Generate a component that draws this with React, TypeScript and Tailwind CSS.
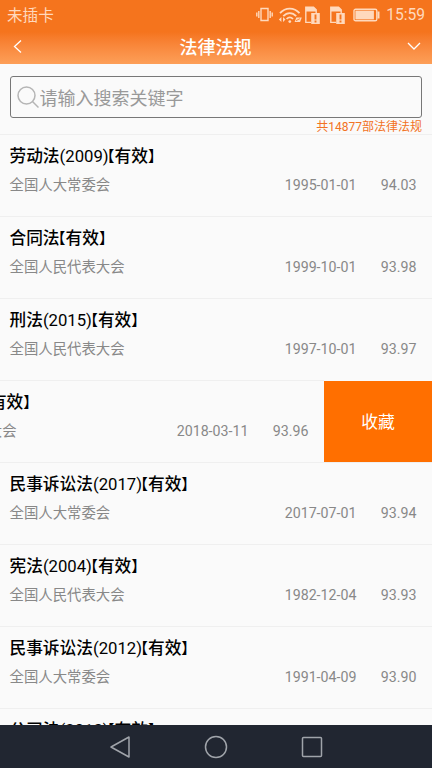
import { useState } from 'react';

interface Law {
  id: number;
  title: string;
  year?: string;
  issuer: string;
  date: string;
  score: string;
}

const LAWS: Law[] = [
  { id: 1, title: '劳动法', year: '2009', issuer: '全国人大常委会', date: '1995-01-01', score: '94.03' },
  { id: 2, title: '合同法', issuer: '全国人民代表大会', date: '1999-10-01', score: '93.98' },
  { id: 3, title: '刑法', year: '2015', issuer: '全国人民代表大会', date: '1997-10-01', score: '93.97' },
  { id: 4, title: '宪法', year: '2018', issuer: '全国人民代表大会', date: '2018-03-11', score: '93.96' },
  { id: 5, title: '民事诉讼法', year: '2017', issuer: '全国人大常委会', date: '2017-07-01', score: '93.94' },
  { id: 6, title: '宪法', year: '2004', issuer: '全国人民代表大会', date: '1982-12-04', score: '93.93' },
  { id: 7, title: '民事诉讼法', year: '2012', issuer: '全国人大常委会', date: '1991-04-09', score: '93.90' },
  { id: 8, title: '公司法', year: '2013', issuer: '全国人大常委会', date: '2014-03-01', score: '93.89' },
];

function SimIcon() {
  return (
    <svg width="17" height="20" viewBox="0 0 17 20" fill="none">
      <path d="M7 17.4H1.8V2.2H9.5L12.2 4.8V8" stroke="currentColor" strokeWidth="1.4" />
      <path d="M1.8 2h7.8l2.4 2.6v1.8H1.8z" fill="currentColor" />
      <path d="M7.2 8h8.6v11H7.2z" fill="currentColor" />
      <path d="M11.5 9.5v5M11.5 15.6v1.8" stroke="#f5741d" strokeWidth="1.9" />
    </svg>
  );
}

function StatusBar() {
  return (
    <div className="flex h-[30px] items-center pl-[7px] pr-[7px] text-[#ffd9bd]">
      <span className="pt-[3px] text-[15.6px] leading-none">未插卡</span>
      <svg className="ml-auto" width="17" height="16" viewBox="0 0 17 16" fill="none" stroke="currentColor" strokeWidth="1.4">
        <path d="M5 1.5h7v12H5zM2.8 4v7M14.2 4v7M.8 5.5v4M16.2 5.5v4" />
      </svg>
      <svg className="ml-[5px]" width="25" height="18" viewBox="0 0 25 18" fill="none" stroke="currentColor" strokeWidth="1.8">
        <path d="M2 7.2c5.4-6.2 14.1-6.2 19.5 0M5.3 10.2c3.8-4.2 9.1-4.2 12.9 0M8.6 13c2.1-2.3 4.3-2.3 6.4 0" />
        <circle cx="11.8" cy="15.6" r="1.4" fill="currentColor" stroke="none" />
        <path d="M3.4 11 .9 13.5l2.5 2.5zM5 11l2.5 2.5L5 16zM18.3 11.5h5.5l-1.7 4.5h-5.5z" fill="currentColor" stroke="none" />
        <path d="m18 14.7 3.9-2" stroke="#f5741d" strokeWidth=".8" />
      </svg>
      <div className="ml-px"><SimIcon /></div>
      <div className="ml-2"><SimIcon /></div>
      <svg className="ml-[7px]" width="28" height="14" viewBox="0 0 28 14" fill="none" stroke="currentColor">
        <rect x="1" y="1.2" width="22.8" height="11.6" rx="1.6" strokeWidth="1.4" />
        <rect x="2.4" y="2.6" width="18.5" height="8.8" fill="currentColor" stroke="none" />
        <path d="M25.5 3.5v7" strokeWidth="2" />
      </svg>
      <span className="ml-[5px] pt-px text-[15.6px] leading-none">15:59</span>
    </div>
  );
}

function LawRow({ law, swiped, onSwipe }: { law: Law; swiped: boolean; onSwipe: () => void }) {
  return (
    <div className="flex h-[82px] shrink-0 overflow-hidden" onClick={onSwipe}>
      <div className={`w-[432px] shrink-0 border-t border-[#efefef] pl-[9.5px] pr-[15.5px] ${swiped ? '-ml-[108px]' : ''}`}>
        <div className="mt-[10px] flex h-6 items-center whitespace-nowrap text-[16.7px] font-medium text-black">
          <span>{law.title}</span>
          {law.year && <span className="font-normal">({law.year})</span>}
          {/* half-width lenticular brackets */}
          <span className="flex w-[6px] justify-end text-[15px] font-normal [font-feature-settings:'halt']">【</span>
          <span>有效</span>
          <span className="flex w-[6px] text-[15px] font-normal [font-feature-settings:'halt']">】</span>
        </div>
        <div className="mt-[7px] flex h-5 items-center text-[14.4px] text-[#888]">
          <span>{law.issuer}</span>
          <span className="ml-auto text-[14.2px]">{law.date}</span>
          <span className="ml-[24.5px] text-[14.2px]">{law.score}</span>
        </div>
      </div>
      {swiped && (
        <button className="mt-px w-[108px] shrink-0 bg-[#ff6f00] pt-[3px] text-[16.8px] text-white">收藏</button>
      )}
    </div>
  );
}

export default function App() {
  const [keyword, setKeyword] = useState('');
  const [swipedId, setSwipedId] = useState(4);

  return (
    <div className="flex h-[768px] w-[432px] flex-col overflow-hidden bg-[#fafafa] font-[Roboto,'Noto_Sans_CJK_SC',sans-serif]">
      <header className="h-16 shrink-0 bg-linear-to-b from-[#f5741d] from-50% to-[#fd9f58]">
        <StatusBar />
        <div className="flex h-[34px] items-center justify-between pl-[13px] pr-[11px] text-white">
          <svg width="10" height="14" viewBox="0 0 10 14" fill="none" stroke="currentColor" strokeWidth="1.3">
            <path d="M8 .5 1.5 6.5l6.5 6" />
          </svg>
          <h1 className="pl-px pt-[2px] text-[18px] font-medium leading-none">法律法规</h1>
          <svg width="14" height="10" viewBox="0 0 14 10" fill="none" stroke="currentColor" strokeWidth="1.3">
            <path d="m1 1 6 6 6-6" />
          </svg>
        </div>
      </header>

      {/* Search */}
      <div className="h-[70px] shrink-0 px-[10px] pt-3">
        <label className="flex h-[42px] items-center rounded-[3px] border border-[#777] pl-[6px]">
          <svg width="22" height="22" viewBox="0 0 22 22" fill="none" stroke="#b5b5b5" strokeWidth="1.5">
            <circle cx="9.5" cy="9.5" r="8.5" />
            <path d="m15.5 15.5 6 6" />
          </svg>
          <input
            value={keyword}
            onChange={(e) => setKeyword(e.target.value)}
            placeholder="请输入搜索关键字"
            className="ml-[.5px] min-w-0 flex-1 bg-transparent pt-[2px] text-[18px] outline-none placeholder:text-[#999]"
          />
        </label>
        <div className="flex h-[16px] items-center justify-end pt-px text-[12px] text-[#f27224]">共14877部法律法规</div>
      </div>

      {/* Law list */}
      <div className="flex min-h-0 flex-1 flex-col overflow-hidden">
        {LAWS.map((law) => (
          <LawRow key={law.id} law={law} swiped={law.id === swipedId} onSwipe={() => setSwipedId(law.id)} />
        ))}
      </div>

      <nav className="flex h-[43px] shrink-0 items-center justify-center gap-[73px] bg-[#212631] text-[#a0a4aa]">
        <svg width="22" height="24" viewBox="0 0 22 24" fill="none" stroke="currentColor" strokeWidth="1.5" strokeLinejoin="round">
          <path d="M20 2v20L2 12z" />
        </svg>
        <svg width="24" height="24" viewBox="0 0 24 24" fill="none" stroke="currentColor" strokeWidth="1.5">
          <circle cx="12" cy="12" r="10.5" />
        </svg>
        <svg width="22" height="22" viewBox="0 0 22 22" fill="none" stroke="currentColor" strokeWidth="1.5">
          <rect x="1.5" y="1.5" width="19" height="19" rx="1" />
        </svg>
      </nav>
    </div>
  );
}
